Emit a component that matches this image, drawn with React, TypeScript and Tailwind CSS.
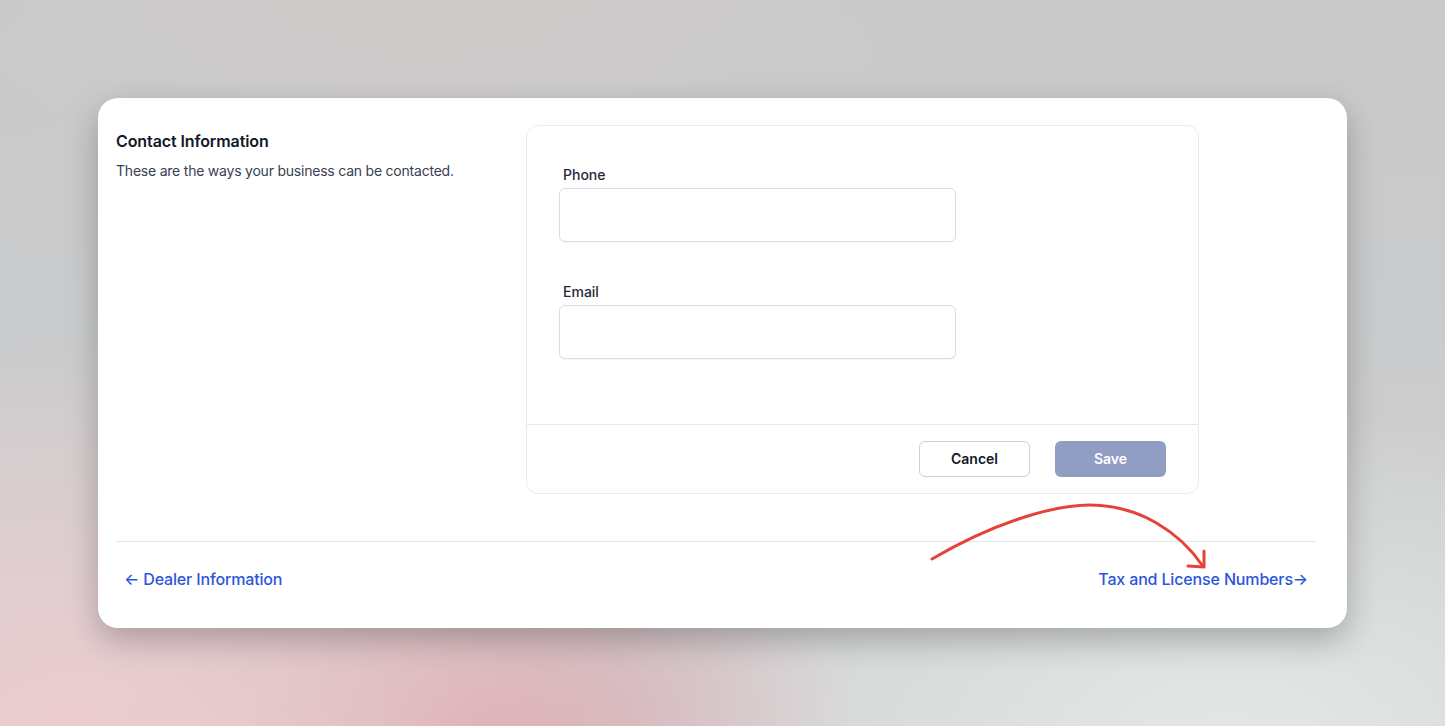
import React from "react";

function Field({ label }: { label: string }) {
  return (
    <div className="flex flex-col">
      <label className="pl-1 text-sm font-medium leading-5 text-[#1f2937]">{label}</label>
      <input
        type="text"
        className="mt-[3px] h-[54px] w-[397px] rounded-md border border-[#dcdde2] bg-white shadow-[0_1px_1px_rgba(0,0,0,0.04)] outline-none"
      />
    </div>
  );
}

function CurvedArrow() {
  return (
    <svg
      className="pointer-events-none absolute left-[832px] top-[405px]"
      width="290"
      height="90"
      viewBox="0 0 290 90"
      fill="none"
    >
      <path
        d="M2 56 C 60 22, 120 2, 160 2 C 210 2, 250 30, 272 62"
        stroke="#e5433a"
        strokeWidth="3"
        strokeLinecap="round"
      />
      <path
        d="M274 48 L 274 64 L 258 63"
        stroke="#e5433a"
        strokeWidth="3"
        strokeLinecap="round"
        strokeLinejoin="round"
      />
    </svg>
  );
}

export default function App() {
  return (
    <div
      className="flex h-[726px] w-full items-start justify-center bg-[#c8c8c9] pt-[98px] font-['Inter',sans-serif]"
      style={{
        backgroundImage:
          "radial-gradient(ellipse 560px 380px at 5% 100%, rgba(236,204,207,1), rgba(236,204,207,0) 100%), radial-gradient(ellipse 380px 200px at 33% 100%, rgba(220,168,175,0.95), rgba(220,168,175,0) 100%), radial-gradient(ellipse 640px 320px at 85% 100%, rgba(226,231,230,1), rgba(226,231,230,0) 100%), radial-gradient(ellipse 700px 300px at 30% 0%, rgba(206,203,202,1), rgba(206,203,202,0) 100%), linear-gradient(180deg, #c9c9ca 0%, #cacbcc 45%, #d3d2d3 100%)",
      }}
    >
      <div className="relative w-[1249px] rounded-[20px] bg-white pl-[18px] pr-[31px] pt-[27px] pb-[37px] shadow-[0_12px_32px_rgba(0,0,0,0.25)]">
        <div className="flex">
          <div className="w-[410px] pt-[4px]">
            <h2 className="text-base font-semibold leading-6 tracking-[-0.1px] text-[#111827]">Contact Information</h2>
            <p className="mt-[8px] text-sm leading-5 tracking-[-0.22px] text-[#374151]">
              These are the ways your business can be contacted.
            </p>
          </div>
          <div className="w-[673px] rounded-xl border border-[#ececef] bg-white">
            <div className="flex flex-col gap-[40px] px-[32px] pt-[39px] pb-[65px]">
              <Field label="Phone" />
              <Field label="Email" />
            </div>
            <div className="flex justify-end gap-[25px] border-t border-[#e8e8eb] px-[32px] py-[16px]">
              <button className="h-[36px] w-[111px] rounded-md border border-[#cfd1d6] bg-white text-sm font-semibold text-[#111827]">
                Cancel
              </button>
              <button className="h-[36px] w-[111px] rounded-md bg-[#919dc2] text-sm font-semibold text-white">
                Save
              </button>
            </div>
          </div>
        </div>
        <div className="mt-[47px] border-t border-[#e5e6ea]" />
        <div className="flex items-center justify-between pt-[25px] pl-[8px] pr-[8px]">
          <a className="text-base font-medium leading-6 tracking-[-0.15px] text-[#2d55dc]">
            ← Dealer Information
          </a>
          <a className="text-base font-medium leading-6 tracking-[-0.15px] text-[#2d55dc]">
            Tax and License Numbers→
          </a>
        </div>
        <CurvedArrow />
      </div>
    </div>
  );
}
